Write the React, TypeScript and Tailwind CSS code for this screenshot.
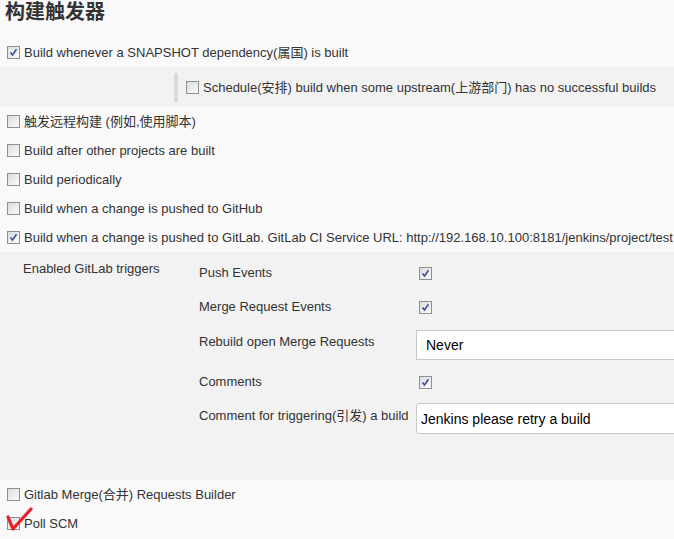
import React from "react";

const FONT = { fontFamily: '"Liberation Sans", Arial, "Noto Sans CJK SC", sans-serif' };

function Box({ checked = false }: { checked?: boolean }) {
  return (
    <span className="inline-flex shrink-0 w-[13px] h-[13px] border border-[#8e8f8f] bg-gradient-to-br from-[#dcdcdc] to-[#fbfbfb] items-center justify-center">
      {checked && (
        <svg width="9" height="9" viewBox="0 0 9 9">
          <path d="M1.5 4.5 L3.5 7 L7.5 1.2" fill="none" stroke="#3d4c96" strokeWidth="1.6" />
        </svg>
      )}
    </span>
  );
}

function Row({ label, checked }: { label: string; checked?: boolean }) {
  return (
    <div className="h-[29px] flex items-center pl-[7px] gap-[4px] whitespace-nowrap overflow-hidden">
      <Box checked={checked} />
      <span>{label}</span>
    </div>
  );
}

export default function App() {
  return (
    <div className="w-[674px] h-[539px] overflow-hidden bg-[#f9f9f9] text-[13px] leading-[16px] text-[#333]" style={FONT}>
      <div className="h-[38px] pl-[5px]">
        <h1 className="text-[20px] leading-[24px] font-bold text-[#333]">构建触发器</h1>
      </div>

      <Row label="Build whenever a SNAPSHOT dependency(属国) is built" checked />

      {/* nested option */}
      <div className="bg-[#f2f2f2] pt-[6px] pb-[5px]">
        <div className="ml-[174px] border-l-4 border-[#dadada] h-[29px] flex items-center pl-[8px] gap-[4px] whitespace-nowrap">
          <Box />
          <span>Schedule(安排) build when some upstream(上游部门) has no successful builds</span>
        </div>
      </div>

      <Row label="触发远程构建 (例如,使用脚本)" />
      <Row label="Build after other projects are built" />
      <Row label="Build periodically" />
      <Row label="Build when a change is pushed to GitHub" />
      <Row label="Build when a change is pushed to GitLab. GitLab CI Service URL: http://192.168.10.100:8181/jenkins/project/test" checked />

      {/* GitLab options */}
      <div className="bg-[#f2f2f2] h-[228px] flex">
        <div className="w-[199px] shrink-0 pl-[23px] pt-[9px] whitespace-nowrap">Enabled GitLab triggers</div>
        <div className="flex-1 min-w-0 pt-[4px]">
          <div className="h-[34px] flex items-center">
            <span className="w-[220px] shrink-0">Push Events</span>
            <Box checked />
          </div>
          <div className="h-[34px] flex items-center">
            <span className="w-[220px] shrink-0">Merge Request Events</span>
            <Box checked />
          </div>
          <div className="h-[42px] flex items-start">
            <span className="w-[217px] shrink-0 pt-[10px]">Rebuild open Merge Requests</span>
            <div className="mt-[6px] h-[30px] w-[300px] shrink-0 bg-white border border-[#c8c8c8] flex items-center pl-[9px] text-[14px] text-black">
              Never
            </div>
          </div>
          <div className="h-[32px] flex items-center">
            <span className="w-[220px] shrink-0">Comments</span>
            <Box checked />
          </div>
          <div className="h-[40px] flex items-start">
            <span className="w-[217px] shrink-0 pt-[10px] whitespace-nowrap">Comment for triggering(引发) a build</span>
            <div className="mt-[5px] h-[31px] w-[300px] shrink-0 bg-white border border-[#c8c8c8] rounded-[3px] flex items-center pl-[4px] text-[14px] text-black">
              Jenkins please retry a build
            </div>
          </div>
        </div>
      </div>

      <Row label="Gitlab Merge(合并) Requests Builder" />
      <div className="relative">
        <Row label="Poll SCM" />
        <svg className="absolute left-[4px] top-[-2px]" width="30" height="28" viewBox="0 0 30 28">
          <path d="M4 10 L9 22 L27 2" fill="none" stroke="#e8202a" strokeWidth="3.2" strokeLinecap="round" strokeLinejoin="round" />
        </svg>
      </div>
    </div>
  );
}
